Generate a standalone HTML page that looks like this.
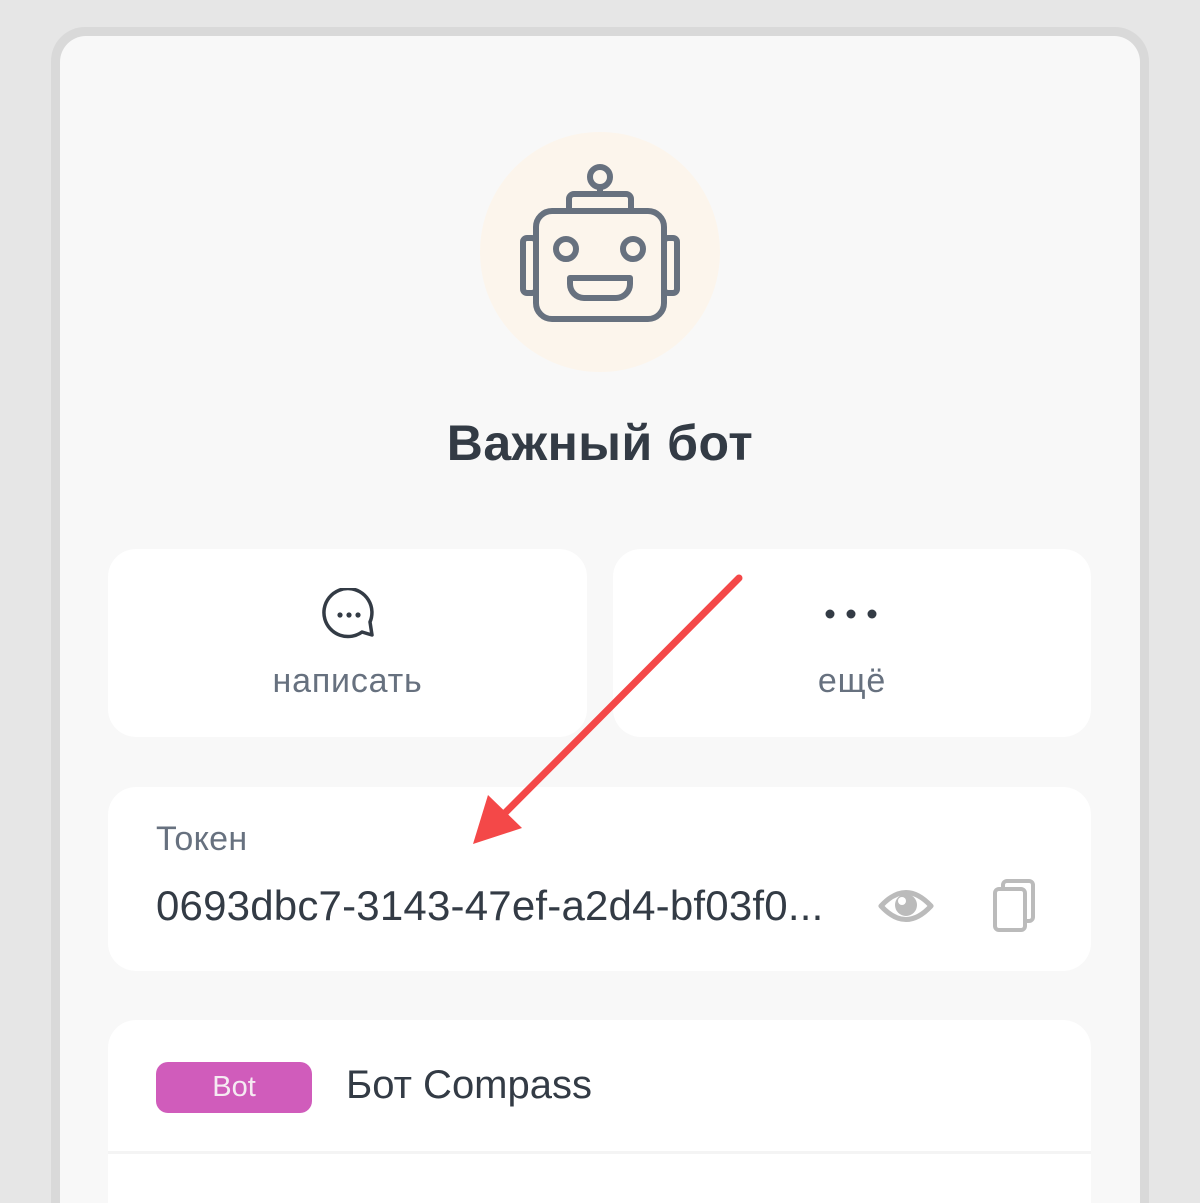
<!DOCTYPE html>
<html><head><meta charset="utf-8"><style>
*{margin:0;padding:0;box-sizing:border-box}
html,body{width:1200px;height:1203px;overflow:hidden}
body{background:#e6e6e6;font-family:"Liberation Sans",sans-serif}
.wrap{position:relative;width:1200px;height:1203px;overflow:hidden}
.frame{position:absolute;left:51px;top:27px;width:1098px;height:1176px;background:#d9d9d9;border-radius:34px 34px 0 0}
.panel{position:absolute;left:60px;top:36px;width:1080px;height:1167px;background:#f8f8f8;border-radius:26px 26px 0 0}
.card{position:absolute;background:#fff;border-radius:28px}
.t{position:absolute;white-space:nowrap}
</style></head><body><div class="wrap">
<div class="frame"></div>
<div class="panel"></div>
<svg style="position:absolute;left:0;top:0" width="1200" height="400">
<circle cx="600" cy="252" r="120" fill="#fcf5ec"/>
<g fill="none" stroke="#67717f" stroke-width="6" stroke-linejoin="round">
<rect x="536" y="211" width="128" height="108" rx="16"/>
<path d="M569 211 V199 a5 5 0 0 1 5 -5 H626 a5 5 0 0 1 5 5 V211"/>
<circle cx="600" cy="177" r="10"/>
<line x1="600" y1="187" x2="600" y2="194"/>
<rect x="523" y="238" width="13" height="55" rx="4"/>
<rect x="664" y="238" width="13" height="55" rx="4"/>
<circle cx="566" cy="249" r="10"/>
<circle cx="633" cy="249" r="10"/>
<path d="M570 278 H630 V284 a14 14 0 0 1 -14 14 H584 a14 14 0 0 1 -14 -14 Z"/>
</g>
</svg>
<div class="t" style="left:0;width:1200px;text-align:center;top:414px;font-size:50px;letter-spacing:0.5px;font-weight:bold;color:#333b45">Важный бот</div>
<div class="card" style="left:108px;top:549px;width:479px;height:188px"></div>
<div class="card" style="left:613px;top:549px;width:478px;height:188px"></div>
<svg style="position:absolute;left:320px;top:588px" width="60" height="56">
<path d="M42 44 A24 24 0 1 1 50 34 L52 47 Z" fill="none" stroke="#333b45" stroke-width="3.5" stroke-linejoin="round"/>
<circle cx="20" cy="27" r="2.6" fill="#333b45"/><circle cx="29" cy="27" r="2.6" fill="#333b45"/><circle cx="38" cy="27" r="2.6" fill="#333b45"/>
</svg>
<div class="t" style="left:108px;width:479px;text-align:center;top:662px;font-size:34px;letter-spacing:0.8px;color:#67717f">написать</div>
<svg style="position:absolute;left:820px;top:604px" width="64" height="20">
<circle cx="10" cy="10" r="4.5" fill="#333b45"/><circle cx="31" cy="10" r="4.5" fill="#333b45"/><circle cx="52" cy="10" r="4.5" fill="#333b45"/>
</svg>
<div class="t" style="left:613px;width:478px;text-align:center;top:662px;font-size:34px;letter-spacing:0.8px;color:#67717f">ещё</div>
<div class="card" style="left:108px;top:787px;width:983px;height:184px"></div>
<div class="t" style="left:156px;top:820px;font-size:34px;letter-spacing:0.3px;color:#67717f">Токен</div>
<div class="t" style="left:156px;top:882px;font-size:42px;letter-spacing:0.2px;color:#333b45">0693dbc7-3143-47ef-a2d4-bf03f0...</div>
<svg style="position:absolute;left:878px;top:885px" width="56" height="40">
<path d="M3 21 Q28 -6 53 21 Q28 48 3 21 Z" fill="none" stroke="#bbb" stroke-width="5" stroke-linejoin="round"/>
<circle cx="28" cy="20" r="11" fill="#bbb"/><circle cx="24" cy="16" r="4" fill="#fff"/>
</svg>
<svg style="position:absolute;left:990px;top:878px" width="50" height="56">
<rect x="13" y="3" width="30" height="40" rx="4" fill="none" stroke="#bbb" stroke-width="4"/>
<rect x="5" y="11" width="30" height="41" rx="4" fill="#fff" stroke="#bbb" stroke-width="4"/>
</svg>
<div class="card" style="left:108px;top:1020px;width:983px;height:183px;border-radius:28px 28px 0 0"></div>
<div style="position:absolute;left:108px;top:1151px;width:983px;height:3px;background:#f4f4f4"></div>
<div class="t" style="left:156px;top:1062px;width:156px;height:51px;border-radius:12px;background:#d05cbb;color:#f5eaf2;font-size:29px;text-align:center;line-height:51px">Bot</div>
<div class="t" style="left:346px;top:1063px;font-size:40px;color:#333b45">Бот Compass</div>
<svg style="position:absolute;left:0;top:0" width="1200" height="1203">
<line x1="739" y1="578" x2="500" y2="818" stroke="#f44848" stroke-width="7" stroke-linecap="round"/>
<path d="M473 844 L488 795 L522 828 Z" fill="#f44848"/>
</svg>
</div></body></html>
